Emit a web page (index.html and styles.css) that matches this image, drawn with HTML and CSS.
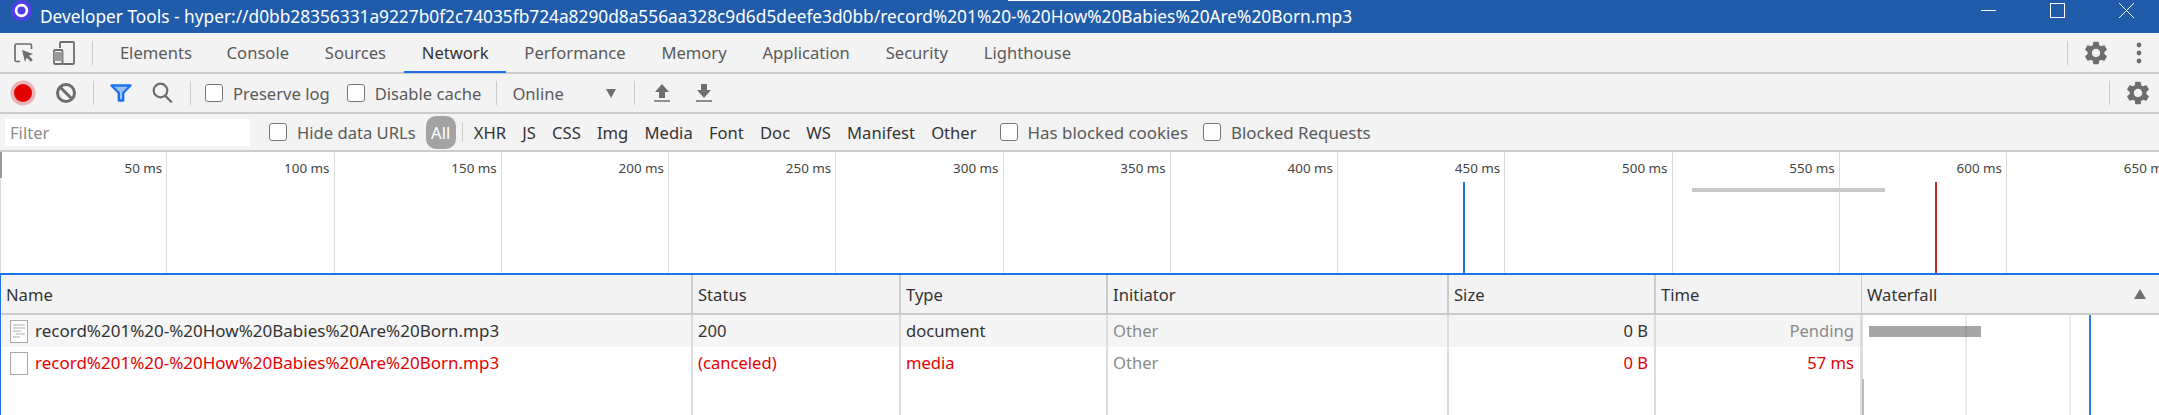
FILE: index.html
```html
<!DOCTYPE html>
<html lang="en">
<head>
<meta charset="utf-8">
<title>Developer Tools</title>
<link rel="stylesheet" href="styles.css">
</head>
<body>
<svg class="defs" width="0" height="0" aria-hidden="true"><defs>
<path id="gear" d="M19.14 12.94c.04-.3.06-.61.06-.94 0-.32-.02-.64-.07-.94l2.03-1.58a.49.49 0 0 0 .12-.61l-1.92-3.32a.488.488 0 0 0-.59-.22l-2.39.96c-.5-.38-1.03-.7-1.62-.94l-.36-2.54a.484.484 0 0 0-.48-.41h-3.84c-.24 0-.43.17-.47.41l-.36 2.54c-.59.24-1.13.57-1.62.94l-2.39-.96c-.22-.08-.47 0-.59.22L2.74 8.87c-.12.21-.08.47.12.61l2.03 1.58c-.05.3-.09.63-.09.94s.02.64.07.94l-2.03 1.58a.49.49 0 0 0-.12.61l1.92 3.32c.12.22.37.29.59.22l2.39-.96c.5.38 1.03.7 1.62.94l.36 2.54c.05.24.24.41.48.41h3.84c.24 0 .44-.17.47-.41l.36-2.54c.59-.24 1.13-.56 1.62-.94l2.39.96c.22.08.47 0 .59-.22l1.92-3.32c.12-.22.07-.47-.12-.61l-2.01-1.58zM12 15.6c-1.98 0-3.6-1.62-3.6-3.6s1.62-3.6 3.6-3.6 3.6 1.62 3.6 3.6-1.62 3.6-3.6 3.6z"/>
</defs></svg>

<header class="titlebar">
  <svg class="app-logo" width="21" height="21" viewBox="0 0 21 21"><circle cx="10.500" cy="10.500" r="10.500" fill="#4f3fe6"/><circle cx="10.500" cy="10.500" r="5.400" fill="none" stroke="#fff" stroke-width="2.600"/></svg>
  <span class="title-text">Developer Tools - hyper://d0bb28356331a9227b0f2c74035fb724a8290d8a556aa328c9d6d5deefe3d0bb/record%201%20-%20How%20Babies%20Are%20Born.mp3</span>
  <span class="title-notch"></span>
  <div class="winctl">
    <svg width="15" height="15" viewBox="0 0 15 15"><path d="M0 7.5h15" stroke="#fff" fill="none"/></svg>
    <svg width="15" height="15" viewBox="0 0 15 15"><rect x=".5" y=".5" width="14" height="14" stroke="#fff" fill="none"/></svg>
    <svg width="15" height="15" viewBox="0 0 15 15"><path d="M0 0l15 15M15 0L0 15" stroke="#fff" fill="none"/></svg>
  </div>
</header>

<nav class="bar tabsbar">
  <svg class="ic-inspect" width="20" height="20" viewBox="0 0 20 20"><path d="M6 18.5H2.5a1.5 1.5 0 0 1-1.5-1.5V2.500A1.500 1.500 0 0 1 2.500 1H16a1.500 1.500 0 0 1 1.500 1.500V6" fill="none" stroke="#6e6e6e" stroke-width="1.700"/><path d="M8 7l11 4-4.200 1.800 4 4-2 2-4-4L11 19z" fill="#6e6e6e"/></svg>
  <svg class="ic-device" width="22" height="24" viewBox="0 0 22 24"><path d="M7 7V2a1 1 0 0 1 1-1h12a1 1 0 0 1 1 1v20a1 1 0 0 1-1 1H10" fill="none" stroke="#6e6e6e" stroke-width="1.800"/><rect x="1" y="9" width="8.500" height="14" rx="1" fill="none" stroke="#6e6e6e" stroke-width="1.800"/><rect x="1" y="11" width="8.500" height="9" fill="#9a9a9a"/></svg>
  <span class="sep sep-tabs"></span>
  <div class="tabs">
    <span class="tab">Elements</span>
    <span class="tab">Console</span>
    <span class="tab">Sources</span>
    <span class="tab active">Network</span>
    <span class="tab">Performance</span>
    <span class="tab">Memory</span>
    <span class="tab">Application</span>
    <span class="tab">Security</span>
    <span class="tab">Lighthouse</span>
  </div>
  <div class="bar-end">
    <span class="sep"></span>
    <svg class="gear" width="28" height="28" viewBox="0 0 24 24"><use href="#gear"/></svg>
    <svg class="kebab" width="6" height="22" viewBox="0 0 6 22"><circle cx="3" cy="3" r="2.400"/><circle cx="3" cy="11" r="2.400"/><circle cx="3" cy="19" r="2.400"/></svg>
  </div>
</nav>

<div class="bar toolbar">
  <svg class="ic-record" width="26" height="26" viewBox="0 0 26 26"><circle cx="13" cy="13" r="12.500" fill="#e9b4b4"/><circle cx="13" cy="13" r="9" fill="#e30000"/></svg>
  <svg class="ic-block" width="22" height="22" viewBox="0 0 22 22"><circle cx="11" cy="11" r="8.500" fill="none" stroke="#6e6e6e" stroke-width="3"/><path d="M5 5l12 12" stroke="#6e6e6e" stroke-width="3"/></svg>
  <span class="sep sep-a"></span>
  <svg class="ic-funnel" width="22" height="18" viewBox="0 0 22 18"><path d="M1.500 1.500h19l-7.300 7.500v7.500h-4.400V9z" fill="#9cc0f2" stroke="#1a73e8" stroke-width="2.400" stroke-linejoin="round"/></svg>
  <svg class="ic-search" width="21" height="22" viewBox="0 0 21 22"><circle cx="8.500" cy="8.500" r="6.800" fill="none" stroke="#6e6e6e" stroke-width="2.200"/><path d="M13 13.500l6.800 7" stroke="#6e6e6e" stroke-width="2.400"/></svg>
  <span class="sep sep-b"></span>
  <label class="check check-preserve"><span class="box"></span>Preserve log</label>
  <label class="check check-disable"><span class="box"></span>Disable cache</label>
  <span class="sep sep-c"></span>
  <span class="throttle">Online</span>
  <span class="caret"></span>
  <span class="sep sep-d"></span>
  <svg class="ic-up" width="16" height="18" viewBox="0 0 16 18"><path d="M8 0l7 8H11v6H5V8H1z" fill="#6e6e6e"/><path d="M0 17h16" stroke="#6e6e6e" stroke-width="1.500"/></svg>
  <svg class="ic-down" width="16" height="18" viewBox="0 0 16 18"><path d="M8 14L1 6h4V0h6v6h4z" fill="#6e6e6e"/><path d="M0 17h16" stroke="#6e6e6e" stroke-width="1.500"/></svg>
  <div class="bar-end">
    <span class="sep"></span>
    <svg class="gear gear-2" width="28" height="28" viewBox="0 0 24 24"><use href="#gear"/></svg>
  </div>
</div>

<div class="bar filterbar">
  <span class="filter-input">Filter</span>
  <label class="check check-hide"><span class="box"></span>Hide data URLs</label>
  <span class="pill">All</span>
  <span class="sep sep-f"></span>
  <div class="types">
    <span>XHR</span><span>JS</span><span>CSS</span><span>Img</span><span>Media</span><span>Font</span><span>Doc</span><span>WS</span><span>Manifest</span><span>Other</span>
  </div>
  <label class="check check-cookies"><span class="box"></span>Has blocked cookies</label>
  <label class="check check-blocked"><span class="box"></span>Blocked Requests</label>
</div>

<section class="overview">
  <div class="tick">50 ms</div><div class="tick">100 ms</div><div class="tick">150 ms</div><div class="tick">200 ms</div><div class="tick">250 ms</div><div class="tick">300 ms</div><div class="tick">350 ms</div><div class="tick">400 ms</div><div class="tick">450 ms</div><div class="tick">500 ms</div><div class="tick">550 ms</div><div class="tick">600 ms</div><div class="tick">650 ms</div>
  <span class="mark mark-start"></span>
  <span class="mark mark-edge"></span>
  <span class="mark mark-blue"></span>
  <span class="mark mark-red"></span>
  <span class="mark mark-bar"></span>
</section>

<section class="table">
  <div class="row head">
    <div class="cell">Name</div><div class="cell">Status</div><div class="cell">Type</div><div class="cell">Initiator</div><div class="cell">Size</div><div class="cell">Time</div>
    <div class="cell cell-wf">Waterfall<span class="sort"></span></div>
  </div>
  <div class="row alt">
    <div class="cell name"><svg class="file" width="18" height="23" viewBox="0 0 18 23"><rect x=".5" y=".5" width="17" height="22" fill="#fff" stroke="#a9a9a9"/><path d="M3 5h12M3 8h12M3 11h8M6 14h9M3 17h7" stroke="#c9c9c9" stroke-width="1.400"/></svg>record%201%20-%20How%20Babies%20Are%20Born.mp3</div>
    <div class="cell">200</div><div class="cell">document</div><div class="cell dim">Other</div><div class="cell num">0 B</div><div class="cell num dim">Pending</div><div class="cell wf"><span class="wf-bar"></span></div>
  </div>
  <div class="row err">
    <div class="cell name"><svg class="file" width="18" height="23" viewBox="0 0 18 23"><rect x=".5" y=".5" width="17" height="22" fill="#fff" stroke="#a9a9a9"/></svg>record%201%20-%20How%20Babies%20Are%20Born.mp3</div>
    <div class="cell">(canceled)</div><div class="cell">media</div><div class="cell dim">Other</div><div class="cell num">0 B</div><div class="cell num">57 ms</div><div class="cell wf"></div>
  </div>
  <div class="row fill">
    <div class="cell"></div><div class="cell"></div><div class="cell"></div><div class="cell"></div><div class="cell"></div><div class="cell"></div><div class="cell wf"></div>
  </div>
  <span class="wf-line wf-l1"></span>
  <span class="wf-line wf-l2"></span>
  <span class="wf-line wf-l3"></span>
</section>
</body>
</html>
```

FILE: styles.css
```css
* { box-sizing: border-box; }
html, body { margin: 0; height: 100%; }
body {
  width: 2159px;
  height: 415px;
  overflow: hidden;
  display: flex;
  flex-direction: column;
  background: #fff;
  font-family: "Noto Sans", "Open Sans", sans-serif;
  font-size: 16.6px;
  color: #333;
}
.defs { position: absolute; }

.titlebar {
  height: 33px;
  flex: none;
  position: relative;
  background: #215cab;
  color: #fff;
  display: flex;
  align-items: center;
  padding-left: 11px;
}
.app-logo { flex: none; align-self: flex-start; }
.title-text { margin-left: 8px; white-space: nowrap; font-size: 17.3px; }
.title-notch { position: absolute; left: 1008px; top: 0; width: 192px; height: 1px; background: #fff; }
.winctl { margin-left: auto; display: flex; gap: 54px; padding-right: 25px; align-self: flex-start; padding-top: 3px; }

.bar {
  flex: none;
  background: #f3f3f3;
  display: flex;
  align-items: center;
  border-bottom: 2px solid #ccc;
  white-space: nowrap;
  color: #5a5a5a;
}
.tabsbar { height: 41px; padding-left: 14px; }
.toolbar { height: 40px; padding-left: 10px; }
.filterbar { height: 38px; padding-left: 5px; }

.sep { width: 1px; height: 24px; background: #ccc; flex: none; }
.bar-end { margin-left: auto; display: flex; align-items: center; }
.gear { fill: #6e6e6e; flex: none; margin-left: 14px; }
.kebab { fill: #6e6e6e; margin-left: 26px; margin-right: 17px; flex: none; }
.gear-2 { margin-right: 7px; }

.ic-inspect { flex: none; }
.ic-device { flex: none; margin-left: 19px; }
.sep-tabs { margin-left: 17px; }
.tabs { display: flex; margin-left: 9px; height: 100%; }
.tab { padding: 0 17.9px; display: flex; align-items: center; border-bottom: 2px solid transparent; margin-bottom: -1px; }
.tab:nth-child(2) { margin-left: -1px; }
.tab.active { color: #333; border-bottom-color: #1a73e8; }

.ic-record { flex: none; }
.ic-block { flex: none; margin-left: 19px; }
.sep-a { margin-left: 16px; }
.ic-funnel { flex: none; margin-left: 16px; }
.ic-search { flex: none; margin-left: 20px; }
.sep-b { margin-left: 17px; }
.check { display: flex; align-items: center; flex: none; }
.box { width: 18px; height: 18px; border: 1px solid #777; border-radius: 3px; background: #fff; margin-right: 10px; flex: none; }
.check-preserve { margin-left: 14px; }
.check-disable { margin-left: 17px; }
.sep-c { margin-left: 15px; }
.throttle { margin-left: 15px; }
.caret { width: 0; height: 0; border-left: 5px solid transparent; border-right: 5px solid transparent; border-top: 9px solid #6e6e6e; margin-left: 42px; }
.sep-d { margin-left: 18px; }
.ic-up { flex: none; margin-left: 19px; }
.ic-down { flex: none; margin-left: 26px; }

.filter-input { width: 245px; height: 27px; background: #fff; color: #8a8a8a; padding-left: 5px; line-height: 27px; flex: none; }
.check-hide { margin-left: 19px; }
.pill { width: 30px; height: 33px; border-radius: 10px; background: #a3a3a3; color: #fff; display: flex; align-items: center; justify-content: center; margin-left: 10px; flex: none; }
.sep-f { margin-left: 6px; height: 20px; }
.types { display: flex; gap: 16.2px; margin-left: 11px; color: #333; }
.check-cookies { margin-left: 23px; font-size: 16.9px; }
.check-blocked { margin-left: 15px; font-size: 16.9px; }

.overview {
  flex: none;
  height: 123px;
  margin-bottom: -2px;
  display: flex;
  position: relative;
  overflow: hidden;
  background: #fff;
  border-bottom: 2px solid #ccc;
}
.tick {
  flex: none;
  width: 167.25px;
  border-right: 1px solid #ddd;
  text-align: right;
  padding: 7px 4px 0 0;
  font-size: 13.4px;
  color: #444;
  white-space: nowrap;
}
.mark { position: absolute; }
.mark-start { left: 0; top: 0; width: 2px; height: 26px; background: #999; }
.mark-edge { left: 0; top: 26px; bottom: 0; width: 1px; background: #ddd; }
.mark-blue { left: 1463px; top: 30px; bottom: 0; width: 2px; background: #1a73e8; }
.mark-red { left: 1935px; top: 30px; bottom: 0; width: 2px; background: #c62828; }
.mark-bar { left: 1692px; top: 36px; width: 193px; height: 4px; background: #c8c8c8; }

.table {
  flex: 1;
  position: relative;
  display: flex;
  flex-direction: column;
  border-top: 2px solid #1a73e8;
  border-left: 1px solid #1a73e8;
  min-height: 0;
}
.row {
  display: grid;
  grid-template-columns: 692px 208px 207px 341px 207px 206px 1fr;
  height: 32px;
  flex: none;
}
.head { height: 40px; background: #f3f3f3; border-bottom: 2px solid #ccc; }
.alt { background: #f5f5f5; }
.err { color: #e60000; }
.fill { flex: 1; }
.cell {
  border-right: 2px solid #ddd;
  padding: 0 5px 2px;
  display: flex;
  align-items: center;
  white-space: nowrap;
  overflow: hidden;
  min-width: 0;
}
.head .cell { border-right-color: #ccc; padding: 0 5px; color: #333; }
.row .cell:last-child { border-right: none; }
.head .cell:nth-child(6) { border-right-width: 1px; }
.row.alt .wf, .row.err .wf { background: #fff; border-left: 1px solid #ddd; }
.fill .wf { border-left: 2px solid #bbb; }
.num { justify-content: flex-end; padding-right: 6px; }
.dim { color: #8a8a8a; }
.name { padding-left: 9px; gap: 7px; font-size: 17px; }
.file { flex: none; margin-top: 2px; }
.cell-wf { position: relative; }
.sort { position: absolute; right: 13px; top: 14px; width: 0; height: 0; border-left: 6px solid transparent; border-right: 6px solid transparent; border-bottom: 10px solid #6e6e6e; }
.wf { position: relative; padding: 0; }
.wf-bar { position: absolute; left: 6px; top: 11px; width: 112px; height: 11px; background: #a6a6a6; }
.wf-line { position: absolute; top: 40px; bottom: 0; width: 2px; background: rgba(0,0,0,.08); }
.wf-l1 { left: 1964px; }
.wf-l2 { left: 2068px; }
.wf-l3 { left: 2088px; background: #2f7de1; }
```
